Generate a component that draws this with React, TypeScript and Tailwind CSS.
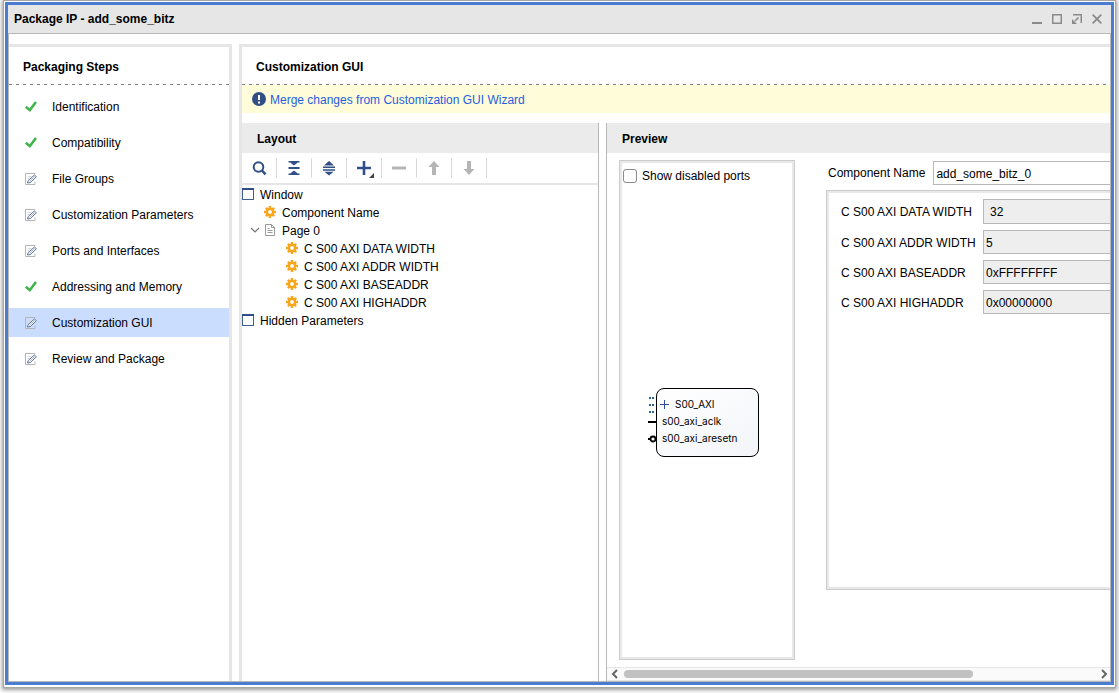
import React from "react";

type StepState = "done" | "edited";

const steps: { label: string; state: StepState; selected?: boolean }[] = [
  { label: "Identification", state: "done" },
  { label: "Compatibility", state: "done" },
  { label: "File Groups", state: "edited" },
  { label: "Customization Parameters", state: "edited" },
  { label: "Ports and Interfaces", state: "edited" },
  { label: "Addressing and Memory", state: "done" },
  { label: "Customization GUI", state: "edited", selected: true },
  { label: "Review and Package", state: "edited" },
];

const parameters = [
  { id: "data-width", label: "C S00 AXI DATA WIDTH", value: "32", field: "h-[25px] pl-1.5" },
  { id: "addr-width", label: "C S00 AXI ADDR WIDTH", value: "5", field: "h-6 pl-0.5" },
  { id: "base-addr", label: "C S00 AXI BASEADDR", value: "0xFFFFFFFF", field: "h-6 pl-0.5" },
  { id: "high-addr", label: "C S00 AXI HIGHADDR", value: "0x00000000", field: "h-6 pl-0.5" },
];

function CheckIcon() {
  return (
    <svg width="12" height="12" viewBox="0 0 12 12" fill="none" aria-hidden="true">
      <path d="M.8 5.800 4.800 9.200 10.900.9" stroke="#3fb54a" strokeWidth="2.600" />
    </svg>
  );
}

function EditIcon() {
  return (
    <svg width="12" height="12" viewBox="0 0 12 12" fill="none" aria-hidden="true">
      <path d="M10 1V.5H.5v11h9.500V8.500" stroke="#b5b5b5" />
      <path d="M2.500 3.500h4M2.500 5.500h2" stroke="#d8d8d8" />
      <path d="M2.500 10 3.200 7.500 9.400 2 11.400 3.800 5.300 9.500Z" fill="#fff" stroke="#5d759f" strokeWidth="1" />
      <path d="M4.500 8.300 9.800 3.200" stroke="#8799b8" strokeWidth=".7" />
    </svg>
  );
}

function GearIcon() {
  return (
    <svg width="12" height="12" viewBox="0 0 12 12" aria-hidden="true">
      <g fill="#f9a51a">
        <rect x="4.750" y="0" width="2.500" height="12" />
        <rect x="0" y="4.750" width="12" height="2.500" />
        <rect x="4.750" y=".2" width="2.500" height="11.600" transform="rotate(45 6 6)" />
        <rect x="4.750" y=".2" width="2.500" height="11.600" transform="rotate(-45 6 6)" />
        <circle cx="6" cy="6" r="4.200" />
      </g>
      <circle cx="6" cy="6" r="1.900" fill="#fff" />
    </svg>
  );
}

function WindowIcon() {
  return (
    <svg width="12" height="12" viewBox="0 0 12 12" aria-hidden="true">
      <rect x=".5" y=".5" width="11" height="11" fill="#fff" stroke="#3f5f93" />
      <rect width="12" height="2" fill="#2f4f86" />
    </svg>
  );
}

function PageIcon() {
  return (
    <svg width="12" height="12" viewBox="0 0 12 12" fill="none" stroke="#9a9a9a" aria-hidden="true">
      <path d="M1.500.5h6l3 3v8h-9ZM7.500.5v3h3" />
      <path d="M3.500 4.500h2M3.500 6.500h5M3.500 8.500h5" />
    </svg>
  );
}

function ToolButton({ label, disabled, children }: { label: string; disabled?: boolean; children: React.ReactNode }) {
  return (
    <button
      type="button"
      aria-label={label}
      disabled={disabled}
      className="flex h-5 w-[35px] items-center justify-center border-r border-[#d9d9d9]"
    >
      <svg width="20" height="20" viewBox="0 0 20 20" fill="none" aria-hidden="true">
        {children}
      </svg>
    </button>
  );
}

function TreeRow({ icon, label, indent }: { icon: React.ReactNode; label: string; indent: string }) {
  return (
    <div className={`flex h-[18px] items-center gap-1.5 ${indent}`}>
      {icon}
      <span className="pt-0.5">{label}</span>
    </div>
  );
}

function PanelTitle({ children }: { children: React.ReactNode }) {
  return (
    <>
      <h2 className="flex h-[37px] shrink-0 items-center px-3.5 pt-0.5 font-bold">{children}</h2>
      <div className="h-px shrink-0 bg-[repeating-linear-gradient(90deg,#808080_0_3px,transparent_3px_7px)]" />
    </>
  );
}

function WindowControls() {
  return (
    <div className="flex gap-2.5 text-[#8a8a8a]">
      <button type="button" aria-label="Minimize">
        <svg width="10" height="10" viewBox="0 0 10 10" fill="currentColor"><path d="M0 8h10v2H0z" /></svg>
      </button>
      <button type="button" aria-label="Maximize">
        <svg width="10" height="10" viewBox="0 0 10 10" fill="none" stroke="currentColor"><rect x=".75" y=".75" width="8.500" height="8.500" strokeWidth="1.500" /></svg>
      </button>
      <button type="button" aria-label="Float">
        <svg width="10" height="10" viewBox="0 0 10 10" fill="none" stroke="currentColor">
          <path d="M1 .75h8.250V9" strokeWidth="1.500" />
          <path d="M6.500 3.500 3 7" strokeWidth="1.600" />
          <path d="M0 5v5h5Z" fill="currentColor" stroke="none" />
        </svg>
      </button>
      <button type="button" aria-label="Close">
        <svg width="10" height="10" viewBox="0 0 10 10" fill="none" stroke="currentColor"><path d="m.7.7 8.600 8.600M9.300.7.7 9.300" strokeWidth="1.800" /></svg>
      </button>
    </div>
  );
}

function StepsPanel() {
  return (
    <nav aria-label="Packaging Steps" className="flex w-[223px] shrink-0 flex-col border-t-3 border-r-3 border-[#e6e6e6]">
      <PanelTitle>Packaging Steps</PanelTitle>
      <ul className="flex flex-col gap-[7px] pt-[7px]">
        {steps.map((step) => (
          <li key={step.label}>
            <button
              type="button"
              aria-current={step.selected ? "step" : undefined}
              className={`flex h-[29px] w-full items-center gap-[15px] pl-4 text-left ${step.selected ? "bg-[#cbddfe]" : ""}`}
            >
              {step.state === "done" ? <CheckIcon /> : <EditIcon />}
              {step.label}
            </button>
          </li>
        ))}
      </ul>
    </nav>
  );
}

function LayoutPanel() {
  return (
    <section className="flex w-[357px] shrink-0 flex-col border-r border-[#b8b8b8]">
      <h3 className="flex h-[30px] shrink-0 items-center bg-[#ebebeb] pl-[15px] pt-px font-bold">Layout</h3>
      <div role="toolbar" aria-label="Layout tools" className="flex h-8 shrink-0 items-center border-b-2 border-[#e6e6e6]">
        <ToolButton label="Search">
          <circle cx="9.500" cy="9" r="4.800" stroke="#2f4f86" strokeWidth="2" />
          <path d="m13 12.500 3.500 3.800" stroke="#2f4f86" strokeWidth="2.500" />
        </ToolButton>
        <ToolButton label="Collapse all">
          <path d="M4.500 3h11v1.500h-1.700L10 7.500 6.200 4.500H4.500zM4.500 9h11v2h-11zM4.500 17h11v-1.500h-1.700L10 12.500l-3.800 3H4.500z" fill="#2f4f86" />
        </ToolButton>
        <ToolButton label="Expand all">
          <path d="m10 3 5 4.500H5zM4 8.500h12V10H4zM4 11.200h12v1.500H4zM10 17.500l4.500-3.800h-9z" fill="#2f4f86" />
        </ToolButton>
        <ToolButton label="Add">
          <path d="M3 8.700h14v2.600H3zM8.700 3h2.600v14H8.700z" fill="#2f4f86" />
          <path d="M20 15v5h-5z" fill="#444" />
        </ToolButton>
        <ToolButton label="Remove" disabled>
          <path d="M3 8.500h14v3H3z" fill="#b5b5b5" />
        </ToolButton>
        <ToolButton label="Move up" disabled>
          <path d="m10 3 5.500 6H12v8H8V9H4.500z" fill="#b5b5b5" />
        </ToolButton>
        <ToolButton label="Move down" disabled>
          <path d="m10 17 5.500-6H12V3H8v8H4.500z" fill="#b5b5b5" />
        </ToolButton>
      </div>
      <div>
        <TreeRow icon={<WindowIcon />} label="Window" indent="" />
        <TreeRow icon={<GearIcon />} label="Component Name" indent="pl-[22px]" />
        <div className="flex items-center gap-1 pl-2">
          <button type="button" aria-label="Collapse Page 0" aria-expanded="true">
            <svg width="10" height="10" viewBox="0 0 10 10" fill="none" stroke="#777" strokeWidth="1.200">
              <path d="m1 3 4 4 4-4" />
            </svg>
          </button>
          <TreeRow icon={<PageIcon />} label="Page 0" indent="" />
        </div>
        {parameters.map((p) => (
          <TreeRow key={p.id} icon={<GearIcon />} label={p.label} indent="pl-11" />
        ))}
        <TreeRow icon={<WindowIcon />} label="Hidden Parameters" indent="" />
      </div>
    </section>
  );
}

function BlockSymbol() {
  return (
    <div className="flex">
      <svg width="8" height="69" viewBox="0 0 8 69" aria-hidden="true">
        <path d="M1 9h2v2H1zM4 9h2v2H4zM1 16h2v2H1zM4 16h2v2H4zM1 23h2v2H1zM4 23h2v2H4z" fill="#2f6496" />
        <path d="M0 33h8v2H0zM0 50h3v2H0z" fill="#000" />
        <circle cx="5" cy="51" r="2.500" fill="#fff" stroke="#000" strokeWidth="1.800" />
      </svg>
      <div className="flex h-[69px] w-[103px] flex-col rounded-lg border border-black bg-linear-to-br from-white to-[#f3f5f9] pt-[7px] pl-[3px] font-[Inter,sans-serif] text-[10px] leading-[17px]">
        <div className="flex items-center gap-1.5">
          <svg width="9" height="9" viewBox="0 0 9 9" stroke="#2f4f9a" aria-hidden="true">
            <path d="M0 4.500h9M4.500 0v9" />
          </svg>
          <span>S00_AXI</span>
        </div>
        <span className="pl-0.5">s00_axi_aclk</span>
        <span className="pl-0.5">s00_axi_aresetn</span>
      </div>
    </div>
  );
}

function PreviewPanel() {
  return (
    <section className="flex min-w-0 flex-1 flex-col border-l border-[#b8b8b8]">
      <h3 className="flex h-[30px] shrink-0 items-center bg-[#ebebeb] pl-[15px] pt-px font-bold">Preview</h3>
      <div className="flex min-h-0 flex-1 gap-[31px] overflow-hidden py-[7px] pl-3">
        <div className="flex w-44 shrink-0 border border-[#cccccc]">
          <div className="flex flex-1 flex-col border-2 border-[#e8e8e8]">
            <label className="flex h-[25px] items-center gap-[5px] pl-px">
              <input
                type="checkbox"
                className="size-3.5 appearance-none rounded-[3px] border border-[#8a8a8a] bg-white checked:bg-[#4a7dcf]"
              />
              Show disabled ports
            </label>
            <div className="flex flex-1 items-center justify-center pr-[7px]">
              <BlockSymbol />
            </div>
          </div>
        </div>
        <div className="flex min-w-0 flex-1 flex-col gap-[5px] pt-px">
          <div className="flex items-center gap-2 pl-0.5">
            <label htmlFor="component-name" className="shrink-0">Component Name</label>
            <input
              id="component-name"
              defaultValue="add_some_bitz_0"
              className="h-6 min-w-0 flex-1 border border-r-0 border-[#b8b8b8] bg-white pt-px pl-0.5"
            />
          </div>
          <div className="flex min-h-[400px] border border-r-0 border-[#cccccc]">
            <div className="flex min-w-0 flex-1 flex-col gap-1.5 border-2 border-r-0 border-[#e8e8e8] pt-1.5 pl-3">
              {parameters.map((p) => (
                <div key={p.id} className="flex items-center">
                  <label htmlFor={p.id} className="w-[142px] shrink-0 whitespace-nowrap pt-px">{p.label}</label>
                  <input
                    id={p.id}
                    readOnly
                    value={p.value}
                    className={`min-w-0 flex-1 border border-r-0 border-[#b8b8b8] bg-[#eeeeee] pt-px ${p.field}`}
                  />
                </div>
              ))}
            </div>
          </div>
        </div>
      </div>
      <div className="flex h-3.5 shrink-0 items-center gap-1 border-t border-b border-[#e6e6e6] bg-[#fafafa] pr-px pl-[3px]">
        <button type="button" aria-label="Scroll left">
          <svg width="10" height="10" viewBox="0 0 10 10" fill="none" stroke="#666" strokeWidth="2"><path d="M7 1 3 5l4 4" /></svg>
        </button>
        <div className="flex-1">
          <div className="h-2 w-[74%] rounded-full bg-[#c1c1c1]" />
        </div>
        <button type="button" aria-label="Scroll right">
          <svg width="10" height="10" viewBox="0 0 10 10" fill="none" stroke="#666" strokeWidth="2"><path d="m3 1 4 4-4 4" /></svg>
        </button>
      </div>
    </section>
  );
}

export default function App() {
  return (
    <div className="flex h-screen bg-white px-[3px] pb-[5px] font-['Liberation_Sans',Arial,sans-serif] text-xs text-black">
      <div className="flex min-w-0 flex-1 border border-[#a6a6a6] bg-white px-px pt-px pb-0.5 shadow-[0_1px_4px_1px_#999999]">
        <div className="flex min-w-0 flex-1 flex-col border-3 border-[#4a7dcf]">
          <header className="flex h-[29px] shrink-0 items-center justify-between border-b border-[#b8b8b8] bg-[#e6e6e6] pr-[9px] pl-1.5">
            <h1 className="font-bold">Package IP - add_some_bitz</h1>
            <WindowControls />
          </header>
          <main className="flex min-h-0 flex-1 gap-[7px] border border-t-0 border-[#b8b8b8] pt-2.5">
            <StepsPanel />
            <div className="flex min-w-0 flex-1 flex-col border-t-3 border-l-3 border-[#e6e6e6]">
              <PanelTitle>Customization GUI</PanelTitle>
              <div className="flex h-7 shrink-0 items-center gap-1 bg-[#fffcd9] pl-2.5">
                <svg width="14" height="14" viewBox="0 0 14 14" aria-hidden="true">
                  <circle cx="7" cy="7" r="7" fill="#2f4f86" />
                  <path d="M6 3h2v5H6zM6 9.500h2v2H6z" fill="#fff" />
                </svg>
                <a href="#merge" className="pt-0.5 text-[#1f5fe0]">Merge changes from Customization GUI Wizard</a>
              </div>
              <div className="flex min-h-0 flex-1 gap-[7px] pt-2.5">
                <LayoutPanel />
                <PreviewPanel />
              </div>
            </div>
          </main>
        </div>
      </div>
    </div>
  );
}
